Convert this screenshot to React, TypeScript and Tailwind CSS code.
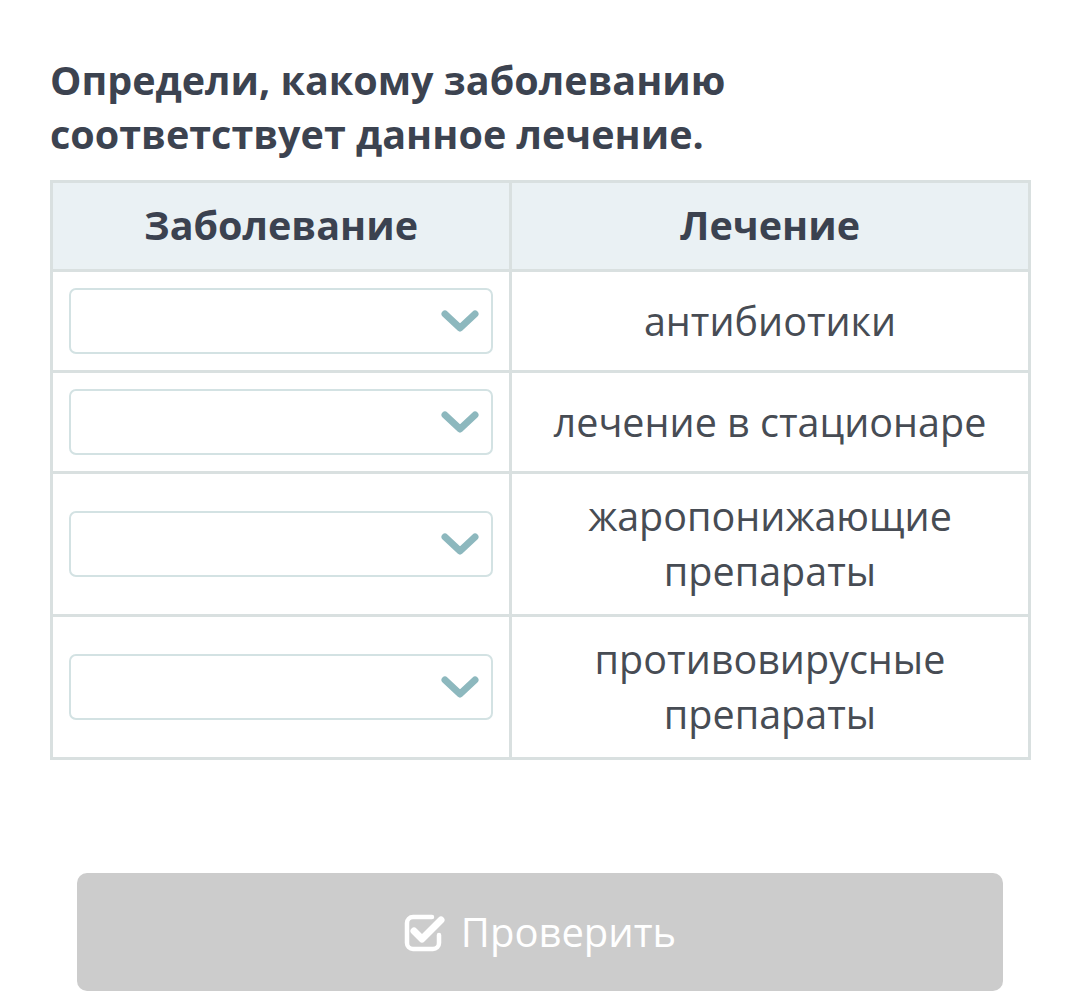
import React from 'react';

const rows = [
  { id: 1, text: ['антибиотики'] },
  { id: 2, text: ['лечение в стационаре'] },
  { id: 3, text: ['жаропонижающие', 'препараты'] },
  { id: 4, text: ['противовирусные', 'препараты'] },
];

const Chevron = () => (
  <svg width="38" height="28" viewBox="0 0 38 28" className="shrink-0">
    <polyline
      points="4,7 19,21 34,7"
      fill="none"
      stroke="#8db8be"
      strokeWidth="7"
      strokeLinecap="round"
      strokeLinejoin="round"
    />
  </svg>
);

const CheckSquare = () => (
  <svg width="42" height="40" viewBox="0 0 42 40" className="shrink-0">
    {/* open square outline */}
    <path
      d="M28 5 H9 a6 6 0 0 0 -6 6 V31 a6 6 0 0 0 6 6 H29 a6 6 0 0 0 6 -6 V23"
      fill="none"
      stroke="#ffffff"
      strokeWidth="4.5"
      strokeLinecap="round"
    />
    {/* check mark */}
    <polyline
      points="10,19 18,27 37,8"
      fill="none"
      stroke="#ffffff"
      strokeWidth="7"
      strokeLinecap="round"
      strokeLinejoin="round"
    />
  </svg>
);

const SelectBox = () => (
  <div className="h-[66px] w-full rounded-[7px] border-2 border-[#d3e2e3] bg-white flex items-center justify-end pr-[12px]">
    <Chevron />
  </div>
);

export default function App() {
  return (
    <div
      className="w-[1080px] h-[995px] bg-white overflow-hidden"
      style={{ fontFamily: '"Open Sans", "Noto Sans", sans-serif' }}
    >
      {/* Question */}
      <h1 className="pl-[50px] pt-[53px] text-[39.5px] leading-[54px] font-bold text-[#3c4350]">
        Определи, какому заболеванию
        <br />
        соответствует данное лечение.
      </h1>

      {/* Matching table */}
      <table className="ml-[50px] mt-[19px] w-[981px] border-collapse table-fixed">
        <colgroup>
          <col className="w-[459px]" />
          <col />
        </colgroup>
        <thead>
          <tr className="h-[89px] bg-[#eaf1f4]">
            <th className="border-[3px] border-[#d9e0e0] text-[39.5px] font-bold text-[#3b4250] text-center">
              Заболевание
            </th>
            <th className="border-[3px] border-[#d9e0e0] text-[39.5px] font-bold text-[#3b4250] text-center">
              Лечение
            </th>
          </tr>
        </thead>
        <tbody>
          {rows.map((row) => (
            <tr key={row.id}>
              <td className="border-[3px] border-[#d9e0e0] px-[16px] py-[16px] align-middle">
                <SelectBox />
              </td>
              <td className="border-[3px] border-[#d9e0e0] px-[10px] py-[15px] text-center text-[39.5px] leading-[55px] text-[#474c54]">
                {row.text.map((line, i) => (
                  <div key={i}>{line}</div>
                ))}
              </td>
            </tr>
          ))}
        </tbody>
      </table>

      {/* Check button */}
      <div className="mt-[113px] flex justify-center">
        <button className="w-[926px] h-[118px] rounded-[10px] bg-[#cccccc] flex items-center justify-center gap-[15px] text-white text-[40px]">
          <CheckSquare />
          <span>Проверить</span>
        </button>
      </div>
    </div>
  );
}
